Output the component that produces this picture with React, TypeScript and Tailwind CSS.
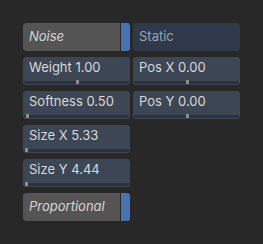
import React from 'react';

const font = { fontFamily: 'Inter, "Noto Sans", sans-serif' };

function Toggle({ label }: { label: string }) {
    return (
        <div className="flex h-[28px] w-[107px]">
            <div className="flex flex-1 items-center rounded-l-[3px] bg-[#545454] pl-[6px] text-[13px] italic text-[#d4d4d4]">
                {label}
            </div>
            <div className="ml-[1px] w-[9px] rounded-r-[3px] bg-[#4772b3]" />
        </div>
    );
}

function Slider({ label, pos }: { label: string; pos: number }) {
    return (
        <div className="relative flex h-[28px] w-[107px] flex-col rounded-[3px] bg-[#3d4654]">
            <div className="flex flex-1 items-center pl-[6px] pb-[2px] text-[13px] text-[#d8d8d8]">{label}</div>
            <div className="relative mx-[1px] mb-[1px] h-[3px] rounded-b-[2px] bg-[#2c333d]">
                <div className="absolute bottom-0 h-[4px] w-[3px] bg-[#8c8c8c]" style={{ left: pos }} />
            </div>
        </div>
    );
}

export default function App() {
    return (
        <div className="h-[244px] w-[263px] bg-[#282828] pl-[23px] pt-[23px]" style={font}>
            <div className="flex gap-[3px]">
                <div className="flex flex-col gap-[6px]">
                    <Toggle label="Noise" />
                    <Slider label="Weight 1.00" pos={52} />
                    <Slider label="Softness 0.50" pos={2} />
                    <Slider label="Size X 5.33" pos={1} />
                    <Slider label="Size Y 4.44" pos={1} />
                    <Toggle label="Proportional" />
                </div>
                <div className="flex flex-col gap-[6px]">
                    <div className="flex h-[28px] w-[107px] items-center rounded-[3px] bg-[#2f394a] pl-[6px] text-[13px] text-[#9ba3ad]">
                        Static
                    </div>
                    <Slider label="Pos X 0.00" pos={52} />
                    <Slider label="Pos Y 0.00" pos={52} />
                </div>
            </div>
        </div>
    );
}
